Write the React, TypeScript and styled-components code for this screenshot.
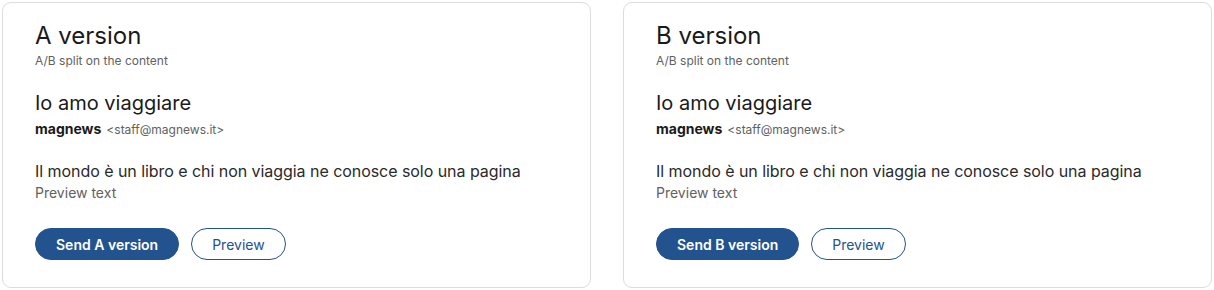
import * as React from 'react'
import styled, { createGlobalStyle } from 'styled-components'

const GlobalStyle = createGlobalStyle`
  html, body {
    margin: 0;
    padding: 0;
    background: #ffffff;
    font-family: Inter, "Noto Sans", Arial, sans-serif;
    color: #1f1f1f;
  }
`

const Page = styled.div`
  display: grid;
  grid-template-columns: 1fr 1fr;
  gap: 32px;
  padding: 2px;
`

const Card = styled.section`
  height: 286px;
  box-sizing: border-box;
  border: 1px solid #dcdcdc;
  border-radius: 9px;
  padding: 18px 32px 0 32px;
  display: flex;
  flex-direction: column;
`

const Title = styled.h2`
  margin: 0;
  font-size: 24px;
  font-weight: 400;
  line-height: 30px;
  color: #1a1a1a;
`

const Subtitle = styled.div`
  font-size: 12px;
  line-height: 16px;
  color: #616161;
  margin-top: 2px;
`

const Subject = styled.div`
  font-size: 20px;
  line-height: 26px;
  color: #1a1a1a;
  margin-top: 21px;
`

const Sender = styled.div`
  margin-top: 4px;
  font-size: 14px;
  line-height: 18px;
  display: flex;
  align-items: baseline;
  gap: 5px;
`

const SenderName = styled.strong`
  font-weight: 700;
  color: #1a1a1a;
`

const SenderMail = styled.span`
  font-size: 12px;
  color: #616161;
`

const Body = styled.div`
  margin-top: 22px;
  font-size: 16px;
  line-height: 20px;
  color: #2a2a2a;
  letter-spacing: -0.05px;
`

const PreviewText = styled.div`
  margin-top: 3px;
  font-size: 14px;
  line-height: 18px;
  color: #616161;
`

const Actions = styled.div`
  margin-top: 26px;
  display: flex;
  gap: 12px;
`

const Button = styled.button<{ $primary?: boolean }>`
  height: 32px;
  box-sizing: border-box;
  border-radius: 999px;
  font-family: inherit;
  font-size: 14px;
  font-weight: ${p => (p.$primary ? 600 : 400)};
  padding: 0 20px;
  border: 1px solid #22538f;
  background: ${p => (p.$primary ? '#22538f' : '#ffffff')};
  color: ${p => (p.$primary ? '#ffffff' : '#22538f')};
  cursor: pointer;
`

const VersionCard = ({ version }: { version: string }) => (
  <Card>
    <Title>{version} version</Title>
    <Subtitle>A/B split on the content</Subtitle>
    <Subject>Io amo viaggiare</Subject>
    <Sender>
      <SenderName>magnews</SenderName>
      <SenderMail>&lt;staff@magnews.it&gt;</SenderMail>
    </Sender>
    <Body>Il mondo è un libro e chi non viaggia ne conosce solo una pagina</Body>
    <PreviewText>Preview text</PreviewText>
    <Actions>
      <Button $primary>Send {version} version</Button>
      <Button>Preview</Button>
    </Actions>
  </Card>
)

export default function App() {
  return (
    <>
      <GlobalStyle />
      <Page>
        <VersionCard version="A" />
        <VersionCard version="B" />
      </Page>
    </>
  )
}
